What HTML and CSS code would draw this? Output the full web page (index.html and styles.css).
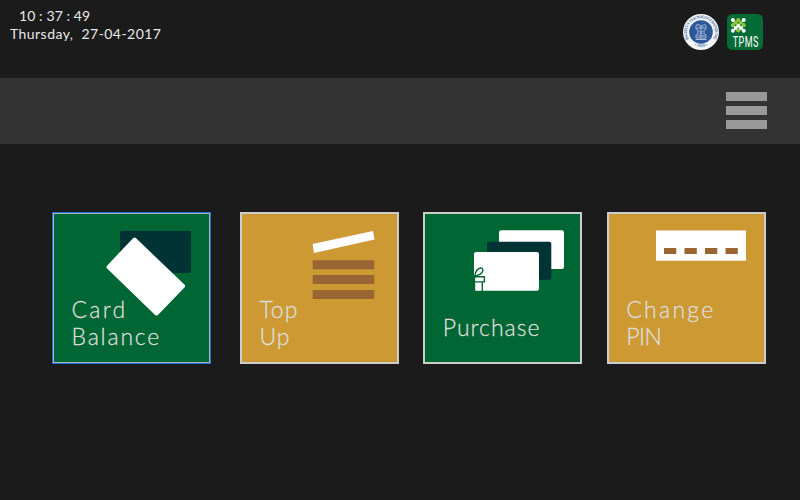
FILE: index.html
```html
<!DOCTYPE html>
<html lang="en">
<head>
<meta charset="utf-8">
<title>TPMS</title>
<link rel="stylesheet" href="styles.css">
</head>
<body>
<header class="top">
  <div class="clock">
    <div class="time">10 : 37 : 49</div>
    <div class="date">Thursday,&nbsp; 27-04-2017</div>
  </div>
  <div class="logos">
    <svg class="seal" viewBox="0 0 36 36">
      <defs>
        <path id="ring" d="M5.800 25A14 14 0 1 1 30.200 25"/>
        <path id="ringBottom" d="M7 28.500A15.300 15.300 0 0 0 29 28.500"/>
      </defs>
      <circle cx="18" cy="18" r="18" fill="#f3f5f8"/>
      <circle cx="18" cy="18" r="11.800" fill="#2c5799"/>
      <text class="seal-text"><textPath href="#ring" textLength="58">INSTITUT TEKNOLOGI BANDUNG</textPath></text>
      <text class="seal-text"><textPath href="#ringBottom" startOffset="50%" text-anchor="middle">• 1920 •</textPath></text>
      <path d="M13 11.500q2-2 4 0t3 0t3 0v3.500l-2 1.500v3l2 1.500v3H13v-3l2-1.500v-3l-2-1.500zM14 14h8M16 16.500l4 4M20 16.500l-4 4M14 22h8M18 11v13M12.500 25.500h11" fill="none" stroke="#a9bedb"/>
    </svg>
    <svg class="tpms" viewBox="0 0 36 36">
      <rect width="36" height="36" rx="5.500" fill="#066b36"/>
      <g fill="#8cc63f">
        <circle cx="11.300" cy="6" r="2.100"/><circle cx="8.600" cy="8.600" r="2.100"/><circle cx="14" cy="8.600" r="2.100"/>
        <circle cx="11.300" cy="11" r="2.100"/><circle cx="5.900" cy="11.200" r="2.100"/><circle cx="16.700" cy="11.200" r="2.100"/>
        <circle cx="11.300" cy="16.500" r="2.100"/>
      </g>
      <g fill="#fff">
        <circle cx="5.900" cy="6" r="2"/><circle cx="16.700" cy="6" r="2"/>
        <circle cx="8.600" cy="14" r="2"/><circle cx="14" cy="14" r="2"/><circle cx="11.300" cy="11.800" r="1.900"/>
        <circle cx="5.900" cy="16.700" r="2"/><circle cx="16.700" cy="16.700" r="2"/>
      </g>
      <text class="tpms-text" transform="translate(5.800 33.300) scale(.62 1)" textLength="41">TPMS</text>
    </svg>
  </div>
</header>
<nav class="bar">
  <button class="menu" aria-label="Menu"><span></span><span></span><span></span></button>
</nav>
<main class="tiles">
  <a class="tile green focused">
    <svg class="art" viewBox="54 214 155 148">
      <rect x="120" y="231" width="71" height="42" rx="2" fill="#003333"/>
      <path d="M134.500 239.500L183 286L156.500 313.500L108.500 267Z" fill="#fff" stroke="#fff" stroke-width="4" stroke-linejoin="round"/>
    </svg>
    <span class="label"><span class="wide">Card</span><br><span class="mid">Balance</span></span>
  </a>
  <a class="tile gold">
    <svg class="art" viewBox="242 214 155 148">
      <path d="M312.500 244L373 231L374.500 239.500L314 253Z" fill="#fff"/>
      <path d="M312.700 260.300h61.600v9h-61.600zM312.700 275h61.600v9h-61.600zM312.700 290h61.600v9h-61.600z" fill="#996633"/>
    </svg>
    <span class="label">Top<br>Up</span>
  </a>
  <a class="tile green">
    <svg class="art" viewBox="425 214 155 148">
      <rect x="499" y="230.300" width="65" height="38.700" rx="2.200" fill="#fff"/>
      <rect x="487" y="241.700" width="64.300" height="38" rx="2" fill="#003333"/>
      <rect x="474" y="252" width="65" height="38.700" rx="2.200" fill="#fff"/>
      <path d="M474 276.700h10.400v5.200H474M474 281.900h8.300v9M474.500 275V291M475 275.500c.5-4 3-7 5.500-7.500c2.500-.3 3 2.500 1.500 4.500c-1.500 2-4.500 3-7 3.500" fill="none" stroke="#006633" stroke-width="1.400"/>
    </svg>
    <span class="label single">Purchase</span>
  </a>
  <a class="tile gold">
    <svg class="art" viewBox="608 214 155 148">
      <rect x="655" y="230.500" width="90" height="30.200" fill="#fff"/>
      <path d="M663 248h12.300v6H663zM683.500 248h12.300v6h-12.300zM704 248h12.300v6H704zM724.500 248h12.300v6h-12.300z" fill="#996633"/>
    </svg>
    <span class="label"><span class="wide">Change</span><br><span class="narrow">PIN</span></span>
  </a>
</main>
</body>
</html>
```
FILE: styles.css
```css
* { box-sizing: border-box; }
body {
  margin: 0;
  height: 500px;
  overflow: hidden;
  background: #1b1b1b;
  font-family: "Century Gothic", Lato, sans-serif;
}
.top {
  height: 78px;
  display: flex;
  justify-content: space-between;
  padding: 7px 37px 0 10px;
}
.clock {
  color: #e8e8e8;
  font-size: 14px;
  line-height: 18px;
  white-space: nowrap;
}
.time { padding-left: 9px; letter-spacing: 0.1px; }
.date { letter-spacing: 0.45px; }
.logos { display: flex; gap: 8px; padding-top: 7px; }
.logos svg { display: block; width: 36px; height: 36px; }
.seal-text { font: 700 4.2px "Liberation Serif", serif; fill: #4d6fa5; }
.tpms-text { font: 14.500px Roboto, sans-serif; fill: #fff; }
.bar {
  height: 66px;
  background: #333;
  display: flex;
  justify-content: flex-end;
  padding: 14px 33.500px 0 0;
}
.menu {
  width: 40.500px;
  height: 38px;
  border: 0;
  padding: 0;
  background: none;
  display: flex;
  flex-direction: column;
  gap: 5px;
}
.menu span { width: 100%; height: 9px; background: #999; }
.tiles {
  display: grid;
  grid-template-columns: 163.500px 159px 159px 159px;
  column-gap: 24.400px;
  padding: 68px 0 0 52px;
}
.tile {
  position: relative;
  width: 159px;
  height: 152px;
  border: 2px solid #ccc;
  display: flex;
  align-items: flex-end;
  padding: 0 0 13px 17.500px;
}
.green { background: #006633; }
.gold { background: #cc9933; }
.focused { border-color: #a9b9c4; outline: 1px solid #1f6bd8; outline-offset: -1px; }
.art { position: absolute; left: 0; top: 0; width: 155px; height: 148px; }
.label {
  position: relative;
  color: #ddd;
  font-size: 23px;
  font-weight: 300;
  line-height: 26.500px;
  letter-spacing: 1px;
  -webkit-text-stroke: 0.3px #ddd;
}
.wide { letter-spacing: 2.3px; }
.mid { letter-spacing: 1.8px; }
.narrow { letter-spacing: -0.5px; }
.single { padding-bottom: 9px; }
```
